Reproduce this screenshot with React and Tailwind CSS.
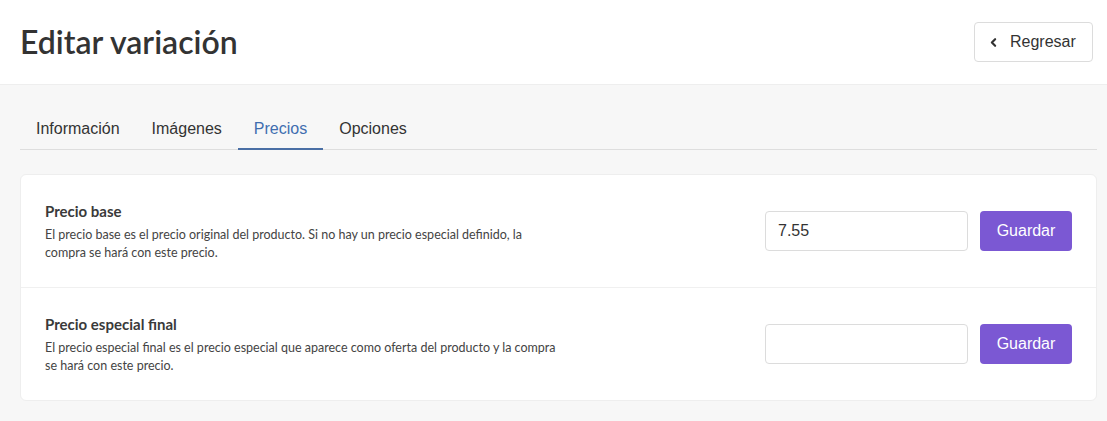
import React, { useState } from "react";
import { ChevronLeft } from "lucide-react";

const TABS = ["Información", "Imágenes", "Precios", "Opciones"];

function PriceRow({ title, description, value, last }) {
  const [price, setPrice] = useState(value || "");
  return (
    <div className={"flex items-center justify-between pl-[24px] pr-[24px]" + (last ? " h-[112px]" : " h-[113px] border-b border-[#f0f0f0]")}>
      <div className="w-[515px]">
        <h3 className="text-[15px] font-bold text-[#3a3a3a]">{title}</h3>
        <p className="mt-[3px] text-[12.5px] leading-[18px] text-[#444]">{description}</p>
      </div>
      <div className="flex items-center gap-3 font-['Liberation_Sans',Arial,sans-serif]">
        <input
          value={price}
          onChange={(e) => setPrice(e.target.value)}
          className="h-10 w-[203px] rounded border border-[#dcdcdc] px-3 text-[16px] text-[#333] outline-none"
        />
        <button className="h-10 w-[92px] rounded bg-[#7b58d3] text-[16px] text-white">
          Guardar
        </button>
      </div>
    </div>
  );
}

export default function App() {
  const [tab, setTab] = useState("Precios");

  return (
    <div className="min-h-screen w-full bg-[#f7f7f7] font-['Lato',sans-serif]">
      <div className="flex h-[85px] items-center justify-between border-b border-[#eeeeee] bg-white pl-5 pr-[14px]">
        <h1 className="text-[32px] font-semibold text-[#333]">Editar variación</h1>
        <button className="flex h-10 w-[119px] items-center gap-[10px] rounded border border-[#dcdcdc] bg-white pl-[12px] text-[16px] text-[#333] font-['Liberation_Sans',Arial,sans-serif]">
          <ChevronLeft size={13} strokeWidth={4} />
          Regresar
        </button>
      </div>

      <div className="pl-5 pr-[10px]">
        <div className="mt-[25px] flex border-b border-[#dedede] font-['Liberation_Sans',Arial,sans-serif]">
          {TABS.map((t) => (
            <button
              key={t}
              onClick={() => setTab(t)}
              className={
                "-mb-px h-[40px] border-b-2 px-4 text-[16px] " +
                (tab === t ? "border-[#4a6fa5] text-[#3f6eb0]" : "border-transparent text-[#333]")
              }
            >
              {t}
            </button>
          ))}
        </div>

        <div className="mt-6 rounded-md border border-[#eeeeee] bg-white">
          <PriceRow
            title="Precio base"
            description="El precio base es el precio original del producto. Si no hay un precio especial definido, la compra se hará con este precio."
            value="7.55"
          />
          <PriceRow
            title="Precio especial final"
            description="El precio especial final es el precio especial que aparece como oferta del producto y la compra se hará con este precio."
            last
          />
        </div>
      </div>
    </div>
  );
}
